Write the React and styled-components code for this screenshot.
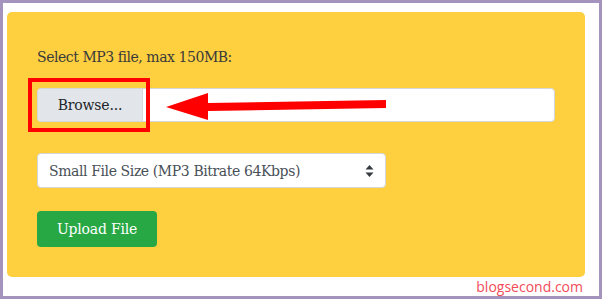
import React from 'react'
import styled, { createGlobalStyle } from 'styled-components'

const Global = createGlobalStyle`
    html, body {
        margin: 0;
        padding: 0;
        background: #fff;
    }
    * {
        box-sizing: border-box;
    }
`

const App = () => {
    return (
        <Frame>
            <Global />
            <Card>
                <Label>Select MP3 file, max 150MB:</Label>
                <FileField>
                    <BrowseButton>Browse...</BrowseButton>
                    <FileName />
                    <Highlight />
                    <Arrow width="224" height="30" viewBox="0 0 224 30">
                        <polygon points="0,15 42,1 42,11 220,8 220,16 42,19 42,28" fill="#ff0000" />
                    </Arrow>
                </FileField>
                <SelectBox>
                    <span>Small File Size (MP3 Bitrate 64Kbps)</span>
                    <svg width="9" height="14" viewBox="0 0 9 14">
                        <polygon points="4.5,1 8.5,5.5 0.5,5.5" fill="#343a40" />
                        <polygon points="4.5,13 8.5,8.5 0.5,8.5" fill="#343a40" />
                    </svg>
                </SelectBox>
                <UploadButton>Upload File</UploadButton>
            </Card>
            <Footer>blogsecond.com</Footer>
        </Frame>
    )
}

export default App

const Frame = styled.div`
    width: 602px;
    height: 299px;
    border: 3px solid #a393bd;
    background: #fff;
    padding: 9px 14px 0 4px;
    display: flex;
    flex-direction: column;
`

const Card = styled.div`
    background: #fecf3f;
    border-radius: 5px;
    padding: 35px 30px 30px 30px;
    display: flex;
    flex-direction: column;
    align-items: flex-start;
    font-family: "DejaVu Serif", "Liberation Serif", serif;
`

const Label = styled.div`
    font-size: 14px;
    line-height: 21px;
    letter-spacing: -0.45px;
    color: #3a3a3a;
    margin-bottom: 20px;
`

const FileField = styled.div`
    position: relative;
    width: 100%;
    height: 34px;
    display: flex;
    border: 1px solid #d4d6da;
    border-radius: 4px;
    background: #fff;
`

const BrowseButton = styled.div`
    width: 105px;
    background: #e2e5ea;
    border-radius: 3px 0 0 3px;
    display: flex;
    align-items: center;
    justify-content: center;
    font-size: 14px;
    letter-spacing: -0.2px;
    color: #212529;
    border-right: 1px solid #d4d6da;
`

const FileName = styled.div`
    flex: 1;
`

const Highlight = styled.div`
    position: absolute;
    left: -10px;
    top: -11px;
    width: 122px;
    height: 54px;
    border: 4px solid #ff0000;
`

const Arrow = styled.svg`
    position: absolute;
    left: 128px;
    top: 3px;
`

const SelectBox = styled.div`
    margin-top: 31px;
    width: 349px;
    height: 35px;
    background: #fff;
    border: 1px solid #d4d6da;
    border-radius: 4px;
    display: flex;
    align-items: center;
    justify-content: space-between;
    padding: 0 11px 0 11px;
    font-size: 14px;
    letter-spacing: -0.4px;
    color: #495057;
`

const UploadButton = styled.button`
    margin-top: 23px;
    width: 120px;
    height: 36px;
    background: #28a745;
    border: none;
    border-radius: 4px;
    color: #fff;
    font-family: "DejaVu Serif", "Liberation Serif", serif;
    font-size: 14px;
    letter-spacing: -0.2px;
    padding: 0;
`

const Footer = styled.div`
    align-self: flex-end;
    margin-right: 2px;
    font-family: "Open Sans", "Noto Sans", sans-serif;
    font-size: 14px;
    line-height: 19px;
    color: #f24b5a;
`
